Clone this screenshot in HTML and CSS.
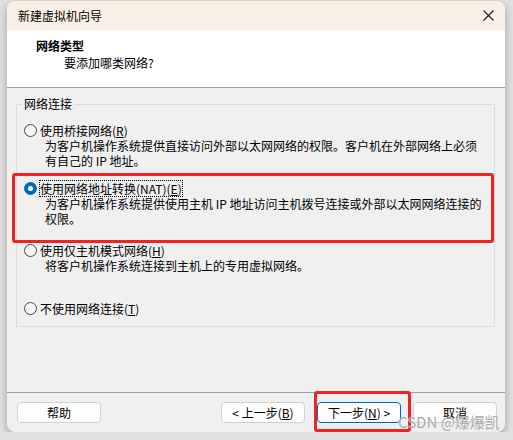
FILE: index.html
```html
<!DOCTYPE html>
<html lang="zh-CN">
<head>
    <meta charset="UTF-8">
    <title>新建虚拟机向导</title>
    <link rel="stylesheet" href="styles.css">
</head>
<body>

    <div class="window">
        <!-- Title bar -->
        <div class="titlebar">
            <span class="titlebar-text">新建虚拟机向导</span>
            <svg class="close" width="11" height="11" viewBox="0 0 11 11">
                <path d="M0.5 0.5 L10.5 10.5 M10.5 0.5 L0.5 10.5" stroke="#1a1a1a" stroke-width="1.1" fill="none"/>
            </svg>
        </div>

        <!-- Page header -->
        <div class="header">
            <div class="header-title">网络类型</div>
            <div class="header-sub">要添加哪类网络?</div>
        </div>

        <!-- Options -->
        <div class="content">
            <fieldset class="group">
                <legend>网络连接</legend>
                <div class="options">
                    <div class="option opt-bridge">
                        <div class="option-label"><span class="radio"></span><span class="label-text">使用桥接网络(<u>R</u>)</span></div>
                        <div class="option-desc">为客户机操作系统提供直接访问外部以太网网络的权限。客户机在外部网络上必须<br>有自己的 IP 地址。</div>
                    </div>
                    <div class="option opt-nat">
                        <div class="option-label"><span class="radio checked"></span><span class="label-text focus">使用网络地址转换(NAT)(<u>E</u>)</span></div>
                        <div class="option-desc">为客户机操作系统提供使用主机 IP 地址访问主机拨号连接或外部以太网网络连接的<br>权限。</div>
                    </div>
                    <div class="option opt-host">
                        <div class="option-label"><span class="radio"></span><span class="label-text">使用仅主机模式网络(<u>H</u>)</span></div>
                        <div class="option-desc">将客户机操作系统连接到主机上的专用虚拟网络。</div>
                    </div>
                    <div class="option opt-none">
                        <div class="option-label"><span class="radio"></span><span class="label-text">不使用网络连接(<u>T</u>)</span></div>
                    </div>
                </div>
            </fieldset>
        </div>

        <!-- Buttons -->
        <div class="footer">
            <button class="btn">帮助</button>
            <div class="spacer"></div>
            <button class="btn">&lt; 上一步(<u>B</u>)</button>
            <button class="btn btn-default">下一步(<u>N</u>) &gt;</button>
            <button class="btn">取消</button>
        </div>

        <!-- Annotations -->
        <div class="mark mark-nat"></div>
        <div class="mark mark-next"></div>
        <div class="watermark">CSDN @爆爆凯</div>
    </div>

</body>
</html>
```

FILE: styles.css
```css
body {
    margin: 0;
    padding: 0;
    background-color: #e2e2e2;
    font-family: "Noto Sans CJK SC", "Noto Sans", sans-serif;
    font-size: 12px;
    color: #000;
    overflow: hidden;
}

.window {
    position: relative;
    display: flex;
    flex-direction: column;
    width: 498px;
    height: 431px;
    margin: 1px 0 0 7px;
    border-radius: 8px;
    overflow: hidden;
    background-color: #f0f0f0;
    box-shadow: 0 3px 10px rgba(0, 0, 0, 0.3);
}

.titlebar {
    display: flex;
    align-items: center;
    height: 29px;
    padding: 0 10px 0 11px;
    background-color: #f9f1e5;
}

.titlebar-text {
    flex: 1;
    line-height: 16px;
}

.close {
    display: block;
    margin-right: 1px;
}

.header {
    height: 49px;
    padding: 8px 0 0 29px;
    background-color: #fff;
    border-bottom: 1px solid #a0a0a0;
}

.header-title {
    font-weight: bold;
    line-height: 16px;
}

.header-sub {
    line-height: 17px;
    margin-left: 28px;
}

.content {
    flex: 1;
    padding: 8px 10px 0 9px;
}

.group {
    margin: 0;
    padding: 0;
    border: 1px solid #dcdcdc;
}

.group legend {
    margin-left: 5px;
    padding: 0 2px;
    line-height: 16px;
}

.options {
    padding: 10px 0 10px 0;
}

.option {
    height: 58px;
}

.opt-nat {
    height: 62px;
}

.opt-none {
    height: 16px;
}

.option-label {
    display: flex;
    align-items: center;
    height: 16px;
    padding-left: 7px;
}

.label-text {
    margin-left: 3px;
    line-height: 15px;
}

.label-text.focus {
    outline: 1px dotted #000;
    outline-offset: 0;
}

.radio {
    width: 11px;
    height: 11px;
    border: 1px solid #444;
    border-radius: 50%;
    background-color: #f7f7f7;
    position: relative;
}

.radio.checked {
    border-color: #0067c0;
    background-color: #0067c0;
}

.radio.checked::after {
    content: "";
    position: absolute;
    left: 3px;
    top: 3px;
    width: 5px;
    height: 5px;
    border-radius: 50%;
    background-color: #fff;
}

.option-desc {
    padding-left: 28px;
    line-height: 15px;
}

.footer {
    display: flex;
    height: 39px;
    padding: 9px 8px 0 10px;
    box-sizing: border-box;
    height: 40px;
    border-top: 1px solid #a0a0a0;
}

.spacer {
    flex: 1;
}

.btn {
    width: 84px;
    height: 21px;
    margin-left: 12px;
    padding: 0;
    font-family: inherit;
    font-size: 12px;
    color: #000;
    background-color: #fdfdfd;
    border: 1px solid #d0d0d0;
    border-radius: 4px;
}

.btn:first-child {
    margin-left: 0;
}

.btn-default {
    border-color: #0067c0;
}

.mark {
    position: absolute;
    border: 3px solid #f02323;
    border-radius: 3px;
    box-sizing: border-box;
}

.mark-nat {
    left: 5px;
    top: 172px;
    width: 482px;
    height: 70px;
}

.mark-next {
    left: 307px;
    top: 390px;
    width: 97px;
    height: 41px;
}

.watermark {
    position: absolute;
    left: 391px;
    top: 412px;
    font-size: 15px;
    line-height: 18px;
    color: rgba(140, 140, 140, 0.75);
    text-shadow: 0 0 1px #fff;
}
```
